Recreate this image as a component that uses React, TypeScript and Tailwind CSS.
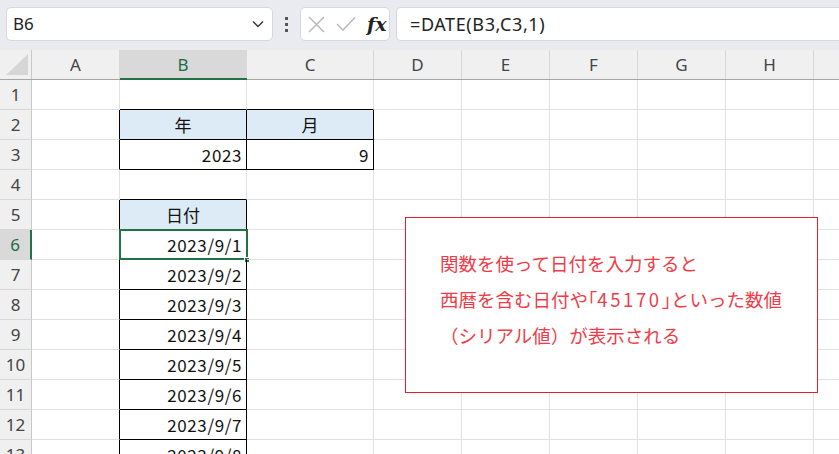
import React from "react";

const colW = [88, 127, 127, 88, 88, 88, 88, 88, 60];
const colL = ["A", "B", "C", "D", "E", "F", "G", "H", "I"];

type Cell = { t?: string; align?: "c" | "r"; fill?: boolean };

const data: Record<string, Cell> = {
  "2-1": { t: "年", align: "c", fill: true },
  "2-2": { t: "月", align: "c", fill: true },
  "3-1": { t: "2023", align: "r" },
  "3-2": { t: "9", align: "r" },
  "5-1": { t: "日付", align: "c", fill: true },
};
for (let i = 1; i <= 8; i++) data[`${i + 5}-1`] = { t: `2023/9/${i}`, align: "r" };

const boxed = (r: number, c: number) =>
  (r === 2 || r === 3) && (c === 1 || c === 2) ? true : r >= 5 && c === 1;

export default function App() {
  const rows = Array.from({ length: 13 }, (_, i) => i + 1);
  return (
    <div
      className="relative w-[839px] h-[454px] overflow-hidden bg-white"
      style={{ fontFamily: '"Noto Sans", "Noto Sans CJK JP", sans-serif' }}
    >
      {/* toolbar */}
      <div className="h-[50px] bg-[#e9ebf0] flex items-start pt-[7px] pl-[6px]">
        <div className="w-[267px] h-[34px] bg-white rounded-[5px] border border-[#d6d8dc] flex items-center pl-[6px] pr-[6px]">
          <span className="text-[17px] text-[#222] flex-1">B6</span>
          <svg width="12" height="8" viewBox="0 0 12 8" className="mr-[2px]">
            <path d="M1 1.5 L6 6.5 L11 1.5" fill="none" stroke="#333" strokeWidth="1.4" />
          </svg>
        </div>
        <div className="w-[27px] h-[34px] flex flex-col items-center justify-center gap-[3px]">
          <div className="w-[3px] h-[3px] bg-[#555]" />
          <div className="w-[3px] h-[3px] bg-[#555]" />
          <div className="w-[3px] h-[3px] bg-[#555]" />
        </div>
        <div className="w-[90px] h-[34px] bg-white rounded-[5px] border border-[#d6d8dc] flex items-center pl-[7px] gap-[11px]">
          <svg width="17" height="17" viewBox="0 0 17 17">
            <path d="M1 1 L16 16 M16 1 L1 16" stroke="#b4b4b4" strokeWidth="1.3" fill="none" />
          </svg>
          <svg width="20" height="16" viewBox="0 0 20 16">
            <path d="M1 8 L7 14 L19 1.5" stroke="#b4b4b4" strokeWidth="1.3" fill="none" />
          </svg>
          <span
            className="text-[19px] italic font-bold text-[#222] leading-none"
            style={{ fontFamily: '"DejaVu Serif", serif' }}
          >
            fx
          </span>
        </div>
        <div className="ml-[6px] flex-1 h-[34px] bg-white rounded-l-[5px] border border-r-0 border-[#d6d8dc] flex items-center pl-[13px]">
          <span className="text-[18px] tracking-[0.6px] text-[#222]">=DATE(B3,C3,1)</span>
        </div>
      </div>

      {/* header row */}
      <div className="flex h-[30px] bg-[#f0f0f0] border-b border-[#a6a6a6]">
        <div className="w-[32px] shrink-0 border-r border-[#c8c8c8] relative">
          <svg width="24" height="22" viewBox="0 0 24 22" className="absolute left-[5px] top-[4px]">
            <path d="M23 0 L23 21 L1 21 Z" fill="#d6d6d6" />
          </svg>
        </div>
        {colL.map((l, c) => (
          <div
            key={l}
            style={{ width: colW[c] }}
            className={`shrink-0 flex items-center justify-center text-[17px] border-r border-[#d8d8d8] relative ${
              c === 1 ? "bg-[#d9d9d9] text-[#1f6b42]" : "text-[#444]"
            }`}
          >
            {l}
            {c === 1 && <div className="absolute left-0 right-[-1px] bottom-[-1px] h-[2px] bg-[#217346]" />}
          </div>
        ))}
      </div>

      {/* rows */}
      {rows.map((r) => (
        <div key={r} className="flex h-[30px]">
          <div
            className={`w-[32px] shrink-0 flex items-center justify-center text-[17px] border-b border-[#d8d8d8] ${
              r === 6 ? "bg-[#d9d9d9] text-[#1f6b42] border-r-2 border-r-[#217346]" : "bg-[#f0f0f0] text-[#444] border-r border-r-[#c8c8c8]"
            }`}
          >
            {r}
          </div>
          {colL.map((l, c) => {
            const d = data[`${r}-${c}`];
            const rightBlack = boxed(r, c) || boxed(r, c + 1);
            const bottomBlack = boxed(r, c) || boxed(r + 1, c);
            return (
              <div
                key={l}
                style={{ width: colW[c] }}
                className={`shrink-0 relative flex items-center px-[4px] text-[17px] text-[#111] border-r border-b ${
                  rightBlack ? "border-r-black" : "border-r-[#e1e1e1]"
                } ${bottomBlack ? "border-b-black" : "border-b-[#e1e1e1]"} ${
                  d?.fill ? "bg-[#ddebf7]" : ""
                } ${d?.align === "c" ? "justify-center" : d?.align === "r" ? "justify-end" : ""}`}
              >
                <span
                  style={{ fontFamily: '"Noto Sans CJK JP", sans-serif' }}
                  className={`leading-none ${d?.align === "r" ? "tracking-[0.6px]" : ""}`}
                >
                  {d?.t}
                </span>
                {r === 6 && c === 1 && (
                  <>
                    <div className="absolute left-[-1px] top-[-1px] right-[-2px] bottom-[-1px] border-2 border-[#217346]" />
                    <div className="absolute right-[-4px] bottom-[-4px] w-[6px] h-[6px] bg-[#217346] border border-white" />
                  </>
                )}
              </div>
            );
          })}
        </div>
      ))}

      {/* callout */}
      <div className="absolute left-[405px] top-[217px] w-[413px] h-[176px] bg-white border border-[#e0202a] pl-[34px] pt-[27px]">
        <div
          className="text-[18.5px] leading-[36px] text-[#f03c48]"
          style={{ fontFamily: '"Noto Sans CJK JP", sans-serif' }}
        >
          <div>関数を使って日付を入力すると</div>
          <div>
            西暦を含む日付や
            <span style={{ fontFeatureSettings: '"halt"' }}>「</span>
            <span className="tracking-[2.6px]">45170</span>
            <span style={{ fontFeatureSettings: '"halt"' }}>」</span>
            といった数値
          </div>
          <div>（シリアル値）が表示される</div>
        </div>
      </div>
    </div>
  );
}
